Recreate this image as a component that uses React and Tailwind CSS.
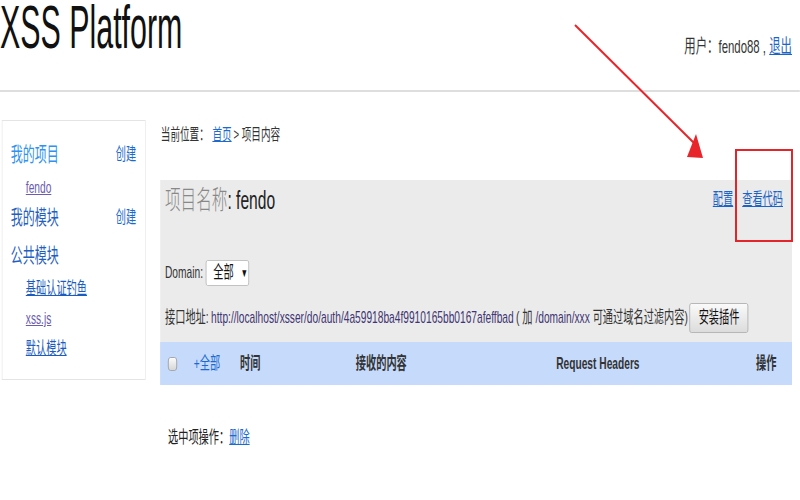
import React from 'react';

const sideLink = 'text-[17px] underline';

export default function App() {
  return (
    <div className="relative w-[800px] h-[500px] overflow-hidden bg-white">
      {/* page, rendered wide then squeezed like the screenshot */}
      <div className="w-[1333px] origin-top-left scale-x-[0.6] font-['Liberation_Sans','Noto_Sans_CJK_SC',sans-serif] text-[#333]">
        {/* header */}
        <div className="flex justify-between h-[92px] border-b-2 border-[#dedede] pr-[13px]">
          <h1 className="text-[61px] leading-none -mt-[3px] text-[#111]">
            <span className="inline-block origin-left scale-x-[0.83]">XSS Platform</span>
          </h1>
          <div className="pt-[36px] text-[19px] leading-[22px]">
            用户：fendo88 , <a className="text-[#1a63c8] underline">退出</a>
          </div>
        </div>

        <div className="flex items-start pt-[28px]">
          {/* sidebar */}
          <div className="ml-[3px] w-[240px] border border-[#e4e4e4] pt-[19px] pb-[15px] pl-[14px] pr-[15px]">
            <div className="flex justify-between items-center h-[30px]">
              <span className="text-[20px] text-[#2e92f0]">我的项目</span>
              <a className="text-[17px] text-[#1a6ad0]">创建</a>
            </div>
            <div className="flex items-center h-[30px] mt-[3px] pl-[25px]">
              <a className={`${sideLink} text-[#6a5cb0]`}>fendo</a>
            </div>
            <div className="flex justify-between items-center h-[30px]">
              <span className="text-[20px] text-[#1f5fbf]">我的模块</span>
              <a className="text-[17px] text-[#1a6ad0]">创建</a>
            </div>
            <div className="flex items-center h-[30px] mt-[8px]">
              <span className="text-[20px] text-[#1f5fbf]">公共模块</span>
            </div>
            <div className="flex items-center h-[30px] mt-[3px] pl-[25px]">
              <a className={`${sideLink} text-[#1a5cc0]`}>基础认证钓鱼</a>
            </div>
            <div className="flex items-center h-[30px] pl-[25px]">
              <a className={`${sideLink} text-[#6a5cb0]`}>xss.js</a>
            </div>
            <div className="flex items-center h-[30px] pl-[25px]">
              <a className={`${sideLink} text-[#1a5cc0]`}>默认模块</a>
            </div>
          </div>

          {/* main */}
          <div className="ml-[24px] w-[1053px]">
            <div className="flex items-center h-[30px] pl-[1px] text-[16px]">
              当前位置：<a className="text-[#1a6ad0] underline ml-[6px]">首页</a>
              <span className="ml-[3px]">&gt; 项目内容</span>
            </div>

            <div className="mt-[30px] bg-[#ebebeb]">
              <div className="flex justify-between items-center h-[40px] pl-[8px] pr-[15px]">
                <div className="text-[26px]">
                  <span className="text-[#888] font-light">项目名称</span>
                  <span className="text-[#222]">: fendo</span>
                </div>
                <div className="flex gap-[15px] text-[17px] text-[#1a63c8]">
                  <a className="underline">配置</a>
                  <a className="underline">查看代码</a>
                </div>
              </div>

              <div className="flex items-center gap-[5px] h-[26px] mt-[40px] pl-[8px] text-[17px]">
                <span>Domain:</span>
                <div className="flex items-center h-[26px] w-[72px] pl-[11px] gap-[12px] bg-white border border-[#b5b5b5] rounded-[3px] text-[#111]">
                  <span>全部</span>
                  <span className="text-[12px]">▼</span>
                </div>
              </div>

              <div className="flex items-center h-[30px] mt-[17px] pl-[8px] text-[17px] whitespace-nowrap">
                <span>接口地址:</span>
                <span className="ml-[4px] text-[#3f3573]">http://localhost/xsser/do/auth/4a59918ba4f9910165bb0167afeffbad</span>
                <span className="ml-[4px]">( 加 <span className="text-[#3f3573]">/domain/xxx</span> 可通过域名过滤内容)</span>
                <button className="ml-[3px] h-[30px] px-[14px] border border-[#a9a9a9] rounded-[3px] bg-gradient-to-b from-[#fafafa] to-[#dcdcdc] text-[17px] text-[#111]">
                  安装插件
                </button>
              </div>

              <div className="grid grid-cols-[43px_77px_193px_334px_333px_1fr] items-center h-[43px] mt-[9px] pl-[13px] bg-[#c6dafb] text-[17px] font-bold text-[#333]">
                <div className="w-[15px] h-[14px] rounded-[4px] border border-[#9a9a9a] bg-gradient-to-b from-[#fbfbfb] to-[#d6d6d6]" />
                <span className="font-normal text-[#1a6ad0]">+全部</span>
                <span>时间</span>
                <span>接收的内容</span>
                <span>Request Headers</span>
                <span>操作</span>
              </div>
            </div>

            <div className="flex items-center h-[30px] mt-[38px] pl-[13px] text-[17px] text-[#222]">
              选中项操作：<a className="text-[#1a6ad0] underline">删除</a>
            </div>
          </div>
        </div>
      </div>

      {/* red annotation drawn over the screenshot */}
      <svg className="absolute inset-0 pointer-events-none" width="800" height="500" viewBox="0 0 800 500">
        <line x1="575" y1="25" x2="694" y2="143" stroke="#e8252b" strokeWidth="2" />
        <polygon points="687,157 703,158 696,134" fill="#e8252b" />
        <rect x="736" y="150" width="56" height="91" fill="none" stroke="#e3242b" strokeWidth="2" />
      </svg>
    </div>
  );
}
